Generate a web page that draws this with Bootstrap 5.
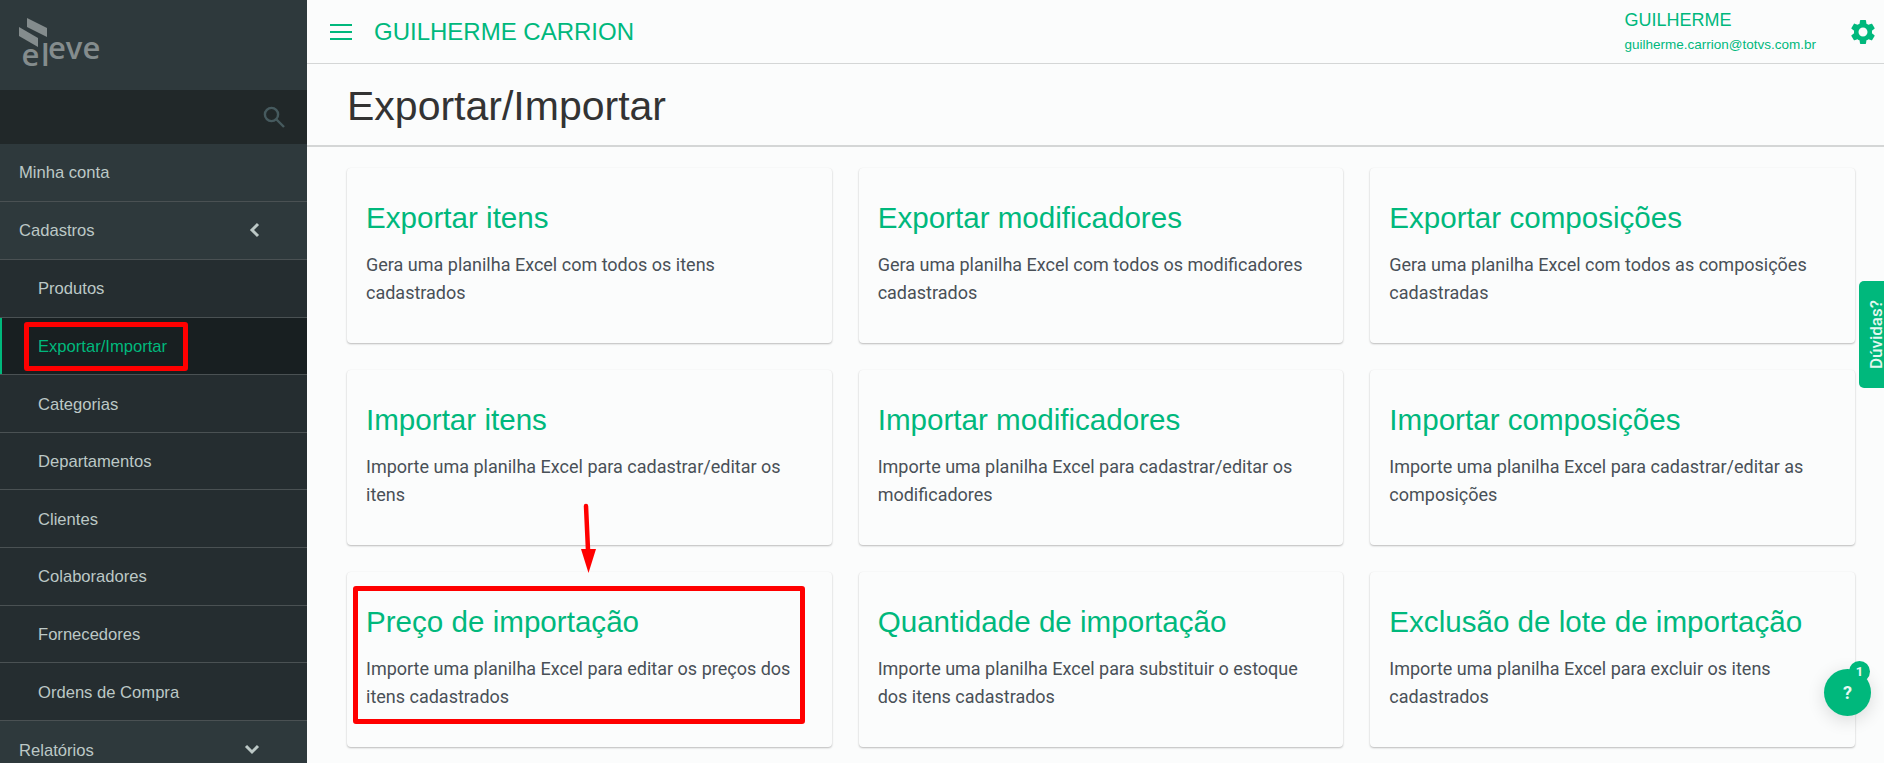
<!DOCTYPE html>
<html lang="pt-BR">
<head>
<meta charset="utf-8">
<title>Exportar/Importar</title>
<link href="https://cdn.jsdelivr.net/npm/bootstrap@5.3.0/dist/css/bootstrap.min.css" rel="stylesheet">
<style>
html,body{height:100%;overflow:hidden}
body{background:#fbfcfc;font-family:"Liberation Sans",Arial,sans-serif}
.app-shell{height:763px;overflow:hidden}
.side{width:307px;flex:0 0 307px;background:#2e393c;color:#bcc8c6;font-size:16.6px;overflow:hidden}
.side-logo{height:90px;padding:18px 0 0 19px}
.side-search{height:54px;background:#212829;padding-right:22px}
.side-item{height:57.6px;padding:3px 47px 0 19px;border-bottom:1px solid #4a5153;display:flex;align-items:center;justify-content:space-between}
.side-item.tall{height:58.5px}
.side-item.sub{background:#252d30;padding-left:38px}
.side-item.cur{background:#181f21;color:#00b87c;box-shadow:inset 2px 0 0 #00b87c}
.side-item.last{border-bottom:0}
.side-item svg{margin-top:-3px}
.main-col{min-width:0;position:relative}
.topbar{height:64px;border-bottom:1px solid #d4d6d6;color:#00b87c;padding:0 6px 0 23px}
.topbar-name{font-size:24px;margin-left:22px}
.who{line-height:1;margin-right:32px}
.who-name{font-size:18px;margin-bottom:9px;margin-top:-1px}
.who-mail{font-size:13.5px}
.page-head{height:83px;border-bottom:2px solid #d4d6d6;padding-left:40px}
.page-head h1{font-size:41px;font-weight:400;color:#333;margin:4px 0 0}
.board{padding:21px 29px 0 40px}
.board .row{--bs-gutter-x:27px;--bs-gutter-y:27px}
.tile{height:175px;border:0;border-radius:4px;background:#fbfcfc;box-shadow:0 1px 2px rgba(0,0,0,.26),0 0 1px rgba(0,0,0,.05);padding:28px 19px 0}
.tile-title{font-size:29.6px;font-weight:400;color:#00b87c;margin:0 0 11px;line-height:44px}
.tile-text{font-family:Roboto,"Liberation Sans",sans-serif;font-size:18px;line-height:27.5px;color:#495057;margin:0}
.mark-red{position:absolute;border:5px solid #f00;border-radius:3px;z-index:5;pointer-events:none}
.mark-side{left:24px;top:322px;width:164px;height:49px}
.mark-tile{left:46px;top:586px;width:452px;height:138px}
.mark-arrow{position:absolute;left:270px;top:500px;z-index:5}
.doubt-tab{position:absolute;right:0;top:281px;width:25px;height:107px;background:#00b87c;border-radius:5px 0 0 5px;color:#e4f7f0;display:flex;align-items:center;justify-content:flex-end;padding-right:1px;z-index:4}
.doubt-tab span{writing-mode:vertical-rl;transform:rotate(180deg);font:500 17px/14px Roboto,sans-serif}
.help-fab{position:absolute;left:1517px;top:669px;width:47px;height:47px;border-radius:50%;background:#00b87c;color:#e8f8f2;font:700 18px Roboto,sans-serif;display:flex;align-items:center;justify-content:center;box-shadow:0 4px 18px rgba(0,0,0,.14);z-index:6}
.help-count{position:absolute;left:25px;top:-8px;width:21px;height:21px;border-radius:50%;background:#00b87c;font:700 13px Roboto,sans-serif;display:flex;align-items:center;justify-content:center;color:#e8f8f2}
</style>
</head>
<body>
<div class="app-shell d-flex">
  <aside class="side">
    <div class="side-logo">
      <svg width="90" height="62" viewBox="0 0 90 62" aria-label="eleve">
        <g fill="#848c8d">
          <polygon points="8,0 28,10 28,19 8,9"/>
          <polygon points="0,9 19,20 19,29 0,18"/>
        </g>
        <g font-family="Open Sans, sans-serif" font-weight="600" font-size="31" fill="#848c8d">
          <text x="2.500" y="48">e</text>
          <text x="22" y="48">l</text>
          <text x="29" y="41">eve</text>
        </g>
      </svg>
    </div>
    <div class="side-search d-flex align-items-center justify-content-end">
      <svg width="22" height="22" viewBox="0 0 22 22" fill="none" stroke="#465a5e" stroke-width="2.4"><circle cx="8.5" cy="8.5" r="6.6"/><path d="M13.5 13.5l7.5 7.5"/></svg>
    </div>
    <div>
      <div class="side-item">Minha conta</div>
      <div class="side-item tall">Cadastros
        <svg width="11" height="16" viewBox="0 0 11 16" fill="none" stroke="#bcc8c6" stroke-width="3"><path d="M9 2L3 8l6 6"/></svg>
      </div>
      <div class="side-item sub">Produtos</div>
      <div class="side-item sub cur">Exportar/Importar</div>
      <div class="side-item sub">Categorias</div>
      <div class="side-item sub">Departamentos</div>
      <div class="side-item sub">Clientes</div>
      <div class="side-item sub">Colaboradores</div>
      <div class="side-item sub">Fornecedores</div>
      <div class="side-item sub">Ordens de Compra</div>
      <div class="side-item last">Relatórios
        <svg width="16" height="11" viewBox="0 0 16 11" fill="none" stroke="#bcc8c6" stroke-width="3"><path d="M2 2l6 6 6-6"/></svg>
      </div>
    </div>
  </aside>
  <main class="main-col flex-grow-1">
    <div class="topbar d-flex align-items-center">
      <svg width="22" height="16" viewBox="0 0 22 16" fill="#00b87c"><rect y="0" width="22" height="2"/><rect y="7" width="22" height="2"/><rect y="14" width="22" height="2"/></svg>
      <div class="topbar-name">GUILHERME CARRION</div>
      <div class="who ms-auto"><div class="who-name">GUILHERME</div><div class="who-mail">guilherme.carrion@totvs.com.br</div></div>
      <svg width="30" height="30" viewBox="0 0 24 24" fill="#00b87c"><path d="M19.14 12.94c.04-.3.06-.61.06-.94 0-.32-.02-.64-.07-.94l2.03-1.58c.18-.14.23-.41.12-.61l-1.92-3.32c-.12-.22-.37-.29-.59-.22l-2.39.96c-.5-.38-1.03-.7-1.62-.94l-.36-2.54c-.04-.24-.24-.41-.48-.41h-3.84c-.24 0-.43.17-.47.41l-.36 2.54c-.59.24-1.13.57-1.62.94l-2.39-.96c-.22-.08-.47 0-.59.22L2.74 8.87c-.12.21-.08.47.12.61l2.03 1.58c-.05.3-.09.63-.09.94s.02.64.07.94l-2.03 1.58c-.18.14-.23.41-.12.61l1.92 3.32c.12.22.37.29.59.22l2.39-.96c.5.38 1.03.7 1.62.94l.36 2.54c.05.24.24.41.48.41h3.84c.24 0 .44-.17.47-.41l.36-2.54c.59-.24 1.13-.56 1.62-.94l2.39.96c.22.08.47 0 .59-.22l1.92-3.32c.12-.22.07-.47-.12-.61l-2.01-1.58zM12 15.6c-1.98 0-3.6-1.62-3.6-3.6s1.62-3.6 3.6-3.6 3.6 1.62 3.6 3.6-1.62 3.6-3.6 3.6z"/></svg>
    </div>
    <div class="page-head d-flex align-items-center"><h1>Exportar/Importar</h1></div>
    <div class="board">
      <div class="row row-cols-3">
        <div class="col"><div class="card tile"><h2 class="tile-title">Exportar itens</h2><p class="tile-text">Gera uma planilha Excel com todos os itens cadastrados</p></div></div>
        <div class="col"><div class="card tile"><h2 class="tile-title">Exportar modificadores</h2><p class="tile-text">Gera uma planilha Excel com todos os modificadores cadastrados</p></div></div>
        <div class="col"><div class="card tile"><h2 class="tile-title">Exportar composições</h2><p class="tile-text">Gera uma planilha Excel com todos as composições cadastradas</p></div></div>
        <div class="col"><div class="card tile"><h2 class="tile-title">Importar itens</h2><p class="tile-text">Importe uma planilha Excel para cadastrar/editar os itens</p></div></div>
        <div class="col"><div class="card tile"><h2 class="tile-title">Importar modificadores</h2><p class="tile-text">Importe uma planilha Excel para cadastrar/editar os modificadores</p></div></div>
        <div class="col"><div class="card tile"><h2 class="tile-title">Importar composições</h2><p class="tile-text">Importe uma planilha Excel para cadastrar/editar as composições</p></div></div>
        <div class="col"><div class="card tile"><h2 class="tile-title">Preço de importação</h2><p class="tile-text">Importe uma planilha Excel para editar os preços dos itens cadastrados</p></div></div>
        <div class="col"><div class="card tile"><h2 class="tile-title">Quantidade de importação</h2><p class="tile-text">Importe uma planilha Excel para substituir o estoque dos itens cadastrados</p></div></div>
        <div class="col"><div class="card tile"><h2 class="tile-title">Exclusão de lote de importação</h2><p class="tile-text">Importe uma planilha Excel para excluir os itens cadastrados</p></div></div>
      </div>
    </div>
    <div class="mark-red mark-tile"></div>
    <svg class="mark-arrow" width="30" height="76" viewBox="0 0 30 76"><path d="M9 6l2 44" stroke="#f00" stroke-width="4.5" stroke-linecap="round"/><polygon points="4,49 19,49 11.500,73" fill="#f00"/></svg>
    <div class="doubt-tab"><span>Dúvidas?</span></div>
    <div class="help-fab">?<span class="help-count">1</span></div>
  </main>
</div>
<div class="mark-red mark-side"></div>
<script src="https://cdn.jsdelivr.net/npm/bootstrap@5.3.0/dist/js/bootstrap.bundle.min.js"></script>
</body>
</html>
